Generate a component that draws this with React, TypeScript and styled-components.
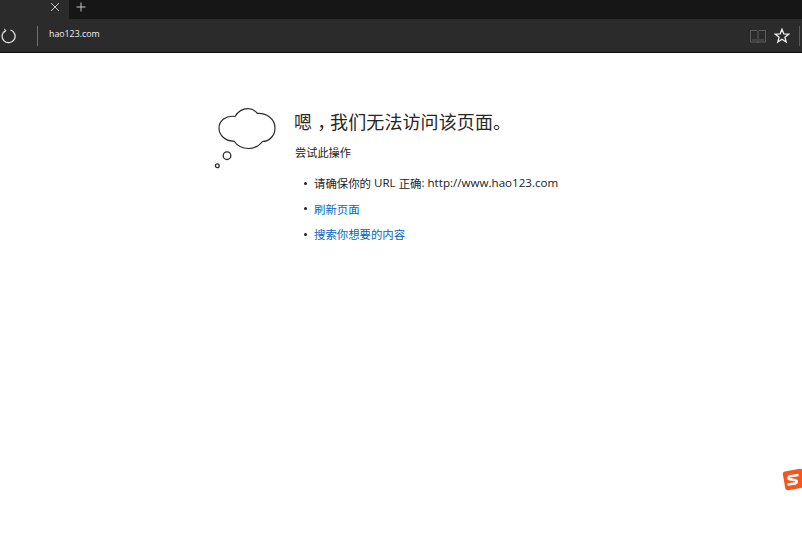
import React from "react";
import styled, { createGlobalStyle } from "styled-components";

const Global = createGlobalStyle`
  html, body { margin: 0; padding: 0; background: #fff; overflow: hidden; }
  body { font-family: "Open Sans", "Noto Sans CJK SC", sans-serif; }
`;

const Page = styled.div`
  position: relative;
  width: 802px;
  height: 534px;
  display: flex;
  flex-direction: column;
  overflow: hidden;
`;

const TabBar = styled.div`
  height: 19px;
  background: #161616;
  display: flex;
  align-items: center;
`;

const Tab = styled.div`
  width: 69px;
  height: 19px;
  background: #2b2b2b;
  display: flex;
  align-items: center;
  justify-content: flex-end;
  padding: 0 9px 5px 0;
  box-sizing: border-box;
`;

const NewTab = styled.div`
  width: 24px;
  display: flex;
  justify-content: center;
  padding-bottom: 5px;
`;

const Toolbar = styled.div`
  height: 33px;
  background: #2b2b2b;
  border-bottom: 1px solid #0a0a0a;
  display: flex;
  align-items: center;
`;

const Reload = styled.div`
  width: 16px;
  margin-left: 1px;
  display: flex;
`;

const Divider = styled.div`
  width: 1px;
  height: 20px;
  background: #6e6e6e;
  margin-left: 20px;
`;

const Address = styled.div`
  margin-left: 11px;
  margin-top: -4px;
  font: 500 8.8px "Open Sans", "Noto Sans CJK SC", sans-serif;
  color: #f0f0f0;
  flex: 1;
`;

const ToolIcons = styled.div`
  display: flex;
  align-items: center;
`;

const BookIcon = styled.div`
  display: flex;
  margin-right: 8px;
`;

const StarIcon = styled.div`
  display: flex;
  margin-right: 9px;
`;

const EndRule = styled.div`
  width: 1px;
  height: 20px;
  background: #5a5a5a;
  margin-right: 2px;
`;

const Content = styled.main`
  flex: 1;
  display: flex;
  align-items: flex-start;
  padding: 55px 0 0 214px;
`;

const Cloud = styled.div`
  width: 62px;
  height: 62px;
  flex: none;
  display: flex;
`;

const Body = styled.div`
  margin-left: 19px;
  color: #1a1a1a;
`;

const Title = styled.h1`
  margin: -1px 0 0 -1px;
  font: 400 18px/28px "Noto Sans CJK SC", "Noto Sans", sans-serif;
  color: #262626;
  letter-spacing: 0.1px;
`;

const TitleComma = styled.span`
  padding-left: 0.28em;
  letter-spacing: -0.28em;
`;

const Subtitle = styled.p`
  margin: 9px 0 0;
  font: 400 11.2px/16px "Noto Sans CJK SC", sans-serif;
  color: #222;
`;

const Suggestions = styled.ul`
  list-style: none;
  margin: 15px 0 0;
  padding: 0 0 0 9px;
  display: flex;
  flex-direction: column;
  gap: 9.5px;
`;

const Item = styled.li`
  display: flex;
  align-items: center;
  height: 16px;
  font: 400 11.4px/16px "Noto Sans CJK SC", sans-serif;
  color: #222;
`;

const Bullet = styled.span`
  width: 3px;
  height: 3px;
  border-radius: 50%;
  background: #222;
  margin-right: 7px;
  flex: none;
`;

const Latin = styled.span`
  font: 400 11.6px/16px "Open Sans", sans-serif;
  white-space: pre;
`;

const Action = styled.a`
  color: #0067c0;
  text-decoration: none;
  font-family: "Noto Sans CJK SC", sans-serif;
`;

const Logo = styled.div`
  position: absolute;
  right: 0;
  top: 468px;
  width: 20px;
  height: 24px;
  overflow: hidden;
`;

export default function App() {
  return (
    <Page>
      <Global />
      <TabBar>
        <Tab>
          <svg width="10" height="10" viewBox="0 0 10 10">
            <path d="M1 1l8 8M9 1l-8 8" stroke="#c4c4c4" strokeWidth="1" fill="none" />
          </svg>
        </Tab>
        <NewTab>
          <svg width="10" height="10" viewBox="0 0 10 10">
            <path d="M5 0.5v9M0.5 5h9" stroke="#c4c4c4" strokeWidth="1" fill="none" />
          </svg>
        </NewTab>
      </TabBar>
      <Toolbar>
        <Reload>
          <svg width="15" height="16" viewBox="0 0 15 16">
            <path d="M4.500 2.500A6.500 6.500 0 1 0 9.500 2" stroke="#e2e2e2" strokeWidth="1.300" fill="none" />
            <path d="M3 0.800L5 2.600L3.200 4.600" stroke="#e2e2e2" strokeWidth="1" fill="none" />
          </svg>
        </Reload>
        <Divider />
        <Address>hao123.com</Address>
        <ToolIcons>
          <BookIcon>
            <svg width="16" height="14" viewBox="0 0 16 14">
              <path
                d="M0.500 1.500h6.500l1 1 1-1h6.500v11.500h-6.500l-1 .500-1-.500h-6.500zM8 2.500v11M2 11h5M9 11h5"
                stroke="#5c5c5c"
                strokeWidth="1"
                fill="none"
              />
            </svg>
          </BookIcon>
          <StarIcon>
            <svg width="16" height="16" viewBox="0 0 16 16">
              <path
                d="M8 1.200l1.800 4.600 4.900.3-3.800 3.100 1.300 4.800L8 11.300l-4.200 2.700 1.300-4.800L1.300 6.100l4.900-.3z"
                stroke="#ececec"
                strokeWidth="1.300"
                fill="none"
              />
            </svg>
          </StarIcon>
          <EndRule />
        </ToolIcons>
      </Toolbar>
      <Content>
        <Cloud>
          <svg width="62" height="62" viewBox="0 0 62 62">
            <path
              d="M21 8.500C24 3.500 29 0.700 34 0.700C38 0.700 41 2.500 43.500 5.500C53 5 61 11 61 20C61 28 55 33.500 48.500 33.500C45 38 40 40.500 34.500 40.500C28 40.500 23 37.500 20 33C11 33.500 5 27 5 20C5 13 12 7 21 8.500Z"
              stroke="#2a2a2a"
              strokeWidth="1.200"
              fill="#fff"
            />
            <circle cx="13" cy="47.700" r="3.800" stroke="#2a2a2a" strokeWidth="1.300" fill="#fff" />
            <circle cx="3.300" cy="57.700" r="1.900" stroke="#2a2a2a" strokeWidth="1.300" fill="#fff" />
          </svg>
        </Cloud>
        <Body>
          <Title>
            嗯<TitleComma>，</TitleComma>我们无法访问该页面。
          </Title>
          <Subtitle>尝试此操作</Subtitle>
          <Suggestions>
            <Item>
              <Bullet />
              请确保你的
              <Latin> URL </Latin>
              正确
              <Latin>: http://www.hao123.com</Latin>
            </Item>
            <Item>
              <Bullet />
              <Action href="#">刷新页面</Action>
            </Item>
            <Item>
              <Bullet />
              <Action href="#">搜索你想要的内容</Action>
            </Item>
          </Suggestions>
        </Body>
      </Content>
      <Logo>
        <svg width="20" height="24" viewBox="0 0 20 24">
          <rect x="2" y="2" width="20" height="19" rx="2.500" transform="rotate(-10 12 12)" fill="#f2571f" />
          <path
            d="M16.500 7L8 8.200C5.800 8.500 5.800 11 7.800 11.300L13.500 12.200C15.500 12.600 15.300 15.200 13.200 15.500L5.500 16.500"
            stroke="#fff"
            strokeWidth="2.400"
            fill="none"
          />
        </svg>
      </Logo>
    </Page>
  );
}
